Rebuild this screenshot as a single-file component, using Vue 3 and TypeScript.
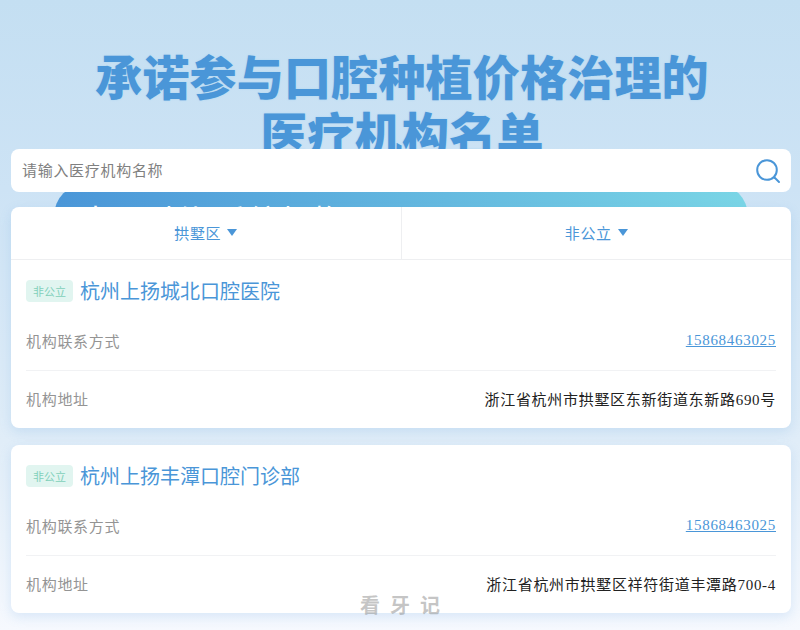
<script setup lang="ts">
interface Clinic { name: string; phone: string; address: string }
const clinics: Clinic[] = [
  { name: '杭州上扬城北口腔医院', phone: '15868463025', address: '浙江省杭州市拱墅区东新街道东新路690号' },
  { name: '杭州上扬丰潭口腔门诊部', phone: '15868463025', address: '浙江省杭州市拱墅区祥符街道丰潭路700-4' },
]
</script>

<template>
  <div class="page">
    <header class="hero">
      <h1>承诺参与口腔种植价格治理的<br />医疗机构名单</h1>
    </header>

    <div class="search">
      <span class="placeholder">请输入医疗机构名称</span>
      <svg class="search-icon" width="26" height="26" viewBox="0 0 26 26" fill="none">
        <circle cx="12" cy="12" r="9.8" stroke="#4a96d8" stroke-width="2" />
        <path d="M19.5 19.5L24 24" stroke="#4a96d8" stroke-width="2" stroke-linecap="round" />
      </svg>
    </div>

    <div class="banner">本月时价 系统机构</div>

    <main class="list">
      <section v-for="(c, i) in clinics" :key="c.name" class="card">
        <div v-if="i === 0" class="filters">
          <div class="filter">拱墅区<i class="caret"></i></div>
          <div class="filter">非公立<i class="caret"></i></div>
        </div>
        <div class="body">
          <div class="head">
            <span class="tag">非公立</span>
            <span class="name">{{ c.name }}</span>
          </div>
          <div class="row">
            <span class="label">机构联系方式</span>
            <a class="phone">{{ c.phone }}</a>
          </div>
          <div class="row">
            <span class="label">机构地址</span>
            <span class="addr">{{ c.address }}</span>
          </div>
        </div>
      </section>
    </main>

    <div class="mark">看牙记</div>
  </div>
</template>

<style>
html, body { margin: 0; background: #f4f8fd; }
</style>

<style scoped>
.page {
  position: relative;
  width: 800px;
  height: 630px;
  overflow: hidden;
  background: linear-gradient(180deg, #c4dff2 0%, #cde3f5 30%, #e0edf8 70%, #f6f9fe 100%);
  font-family: "Liberation Serif", "Noto Sans CJK SC", serif;
  letter-spacing: 0.7px;
}
.hero {
  height: 149px;
  overflow: hidden;
  box-sizing: border-box;
  padding: 46px 0 0 4px;
}
h1 {
  margin: 0;
  text-align: center;
  font-family: "Noto Sans CJK SC", sans-serif;
  font-weight: 900;
  font-size: 47px;
  line-height: 57px;
  letter-spacing: 0.2px;
  color: #4a96d8;
  text-shadow: 0 0 2px #a9d3f0;
}
.search {
  position: relative;
  z-index: 2;
  height: 43px;
  margin: 0 9px 0 11px;
  padding: 0 10px 2px 11px;
  box-sizing: border-box;
  display: flex;
  align-items: center;
  justify-content: space-between;
  background: #fff;
  border-radius: 8px;
}
.placeholder { font-size: 15px; color: #808080; }
.search-icon { flex: none; margin-bottom: -2px; }
.banner {
  height: 60px;
  margin: -8px 52px 0 54px;
  padding: 17px 0 0 26px;
  box-sizing: border-box;
  border-radius: 32px 32px 0 0;
  background: linear-gradient(95deg, #4a96d8 0%, #7ad6e6 100%);
  color: #fff;
  font-family: "Noto Sans CJK SC", sans-serif;
  font-size: 31px;
  line-height: 36px;
  letter-spacing: 1px;
}
.list {
  position: relative;
  z-index: 1;
  margin: -37px 9px 0 11px;
  display: flex;
  flex-direction: column;
  gap: 17px;
}
.card {
  background: #fff;
  border-radius: 8px;
  box-shadow: 0 4px 12px rgba(90, 155, 220, 0.18);
}
.filters {
  display: flex;
  height: 53px;
  box-sizing: border-box;
  border-bottom: 1px solid #eeeff1;
}
.filter {
  flex: 1 1 0;
  box-sizing: border-box;
  display: flex;
  align-items: center;
  justify-content: center;
  gap: 6px;
  padding-bottom: 2px;
  font-size: 15px;
  color: #4a96d8;
}
.filter:first-child { border-right: 1px solid #eeeff1; }
.caret {
  width: 0;
  height: 0;
  border-left: 5.5px solid transparent;
  border-right: 5.5px solid transparent;
  border-top: 7px solid #4a96d8;
}
.body { padding: 20px 15px 0; }
.head {
  display: flex;
  align-items: center;
  height: 22px;
  margin-bottom: 11px;
}
.tag {
  width: 47px;
  height: 22px;
  margin-right: 7px;
  display: flex;
  align-items: center;
  justify-content: center;
  border-radius: 4px;
  background: #e1f5f0;
  color: #7fd0ba;
  font-size: 11px;
  letter-spacing: 0;
}
.name {
  font-size: 20px;
  letter-spacing: 0;
  color: #4a96d8;
  margin-top: -2px;
}
.row {
  display: flex;
  justify-content: space-between;
  align-items: center;
  box-sizing: border-box;
  height: 57px;
  padding-bottom: 2px;
  font-size: 15px;
}
.row + .row { border-top: 1px solid #f1f2f4; height: 58px; padding-bottom: 3px; }
.label { color: #949494; }
.phone { color: #4a96d8; text-decoration: underline; }
.addr { color: #222; }
.mark {
  position: absolute;
  z-index: 3;
  left: 360px;
  top: 592px;
  font-family: "Noto Sans CJK SC", sans-serif;
  font-weight: 700;
  font-size: 20px;
  line-height: 26px;
  letter-spacing: 10px;
  color: rgba(140, 140, 140, 0.5);
  white-space: nowrap;
}
</style>
